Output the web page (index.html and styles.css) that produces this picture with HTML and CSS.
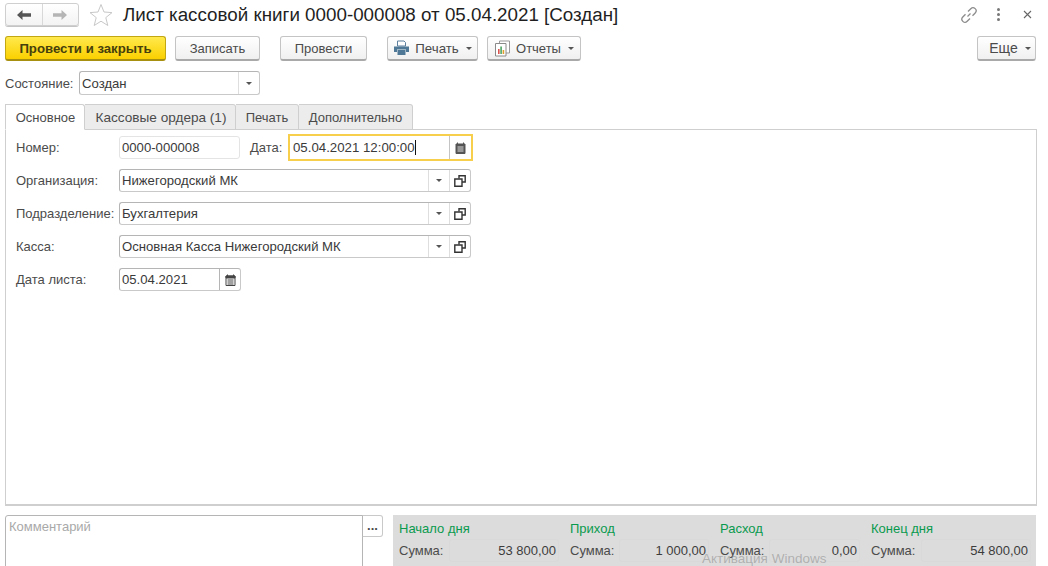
FILE: index.html

```html
<!DOCTYPE html>
<html lang="ru">
<head>
  <meta charset="UTF-8">
  <title>Лист кассовой книги</title>
  <link rel="stylesheet" href="styles.css">
</head>
<body>

  <div class="head">
    <div class="nav">
      <div class="nav-btn">
        <svg width="16" height="12" viewBox="0 0 16 12"><path d="M1 6 L6.5 1 V4.2 H15 V7.8 H6.5 V11 Z" fill="#555"/></svg>
      </div>
      <div class="nav-btn">
        <svg width="16" height="12" viewBox="0 0 16 12"><path d="M15 6 L9.5 1 V4.2 H1 V7.8 H9.5 V11 Z" fill="#b5b5b5"/></svg>
      </div>
    </div>
    <svg class="star" width="24" height="24" viewBox="0 0 24 24"><path d="M12 1.5 L15 9 L23 9.6 L16.8 14.6 L18.8 22.5 L12 18.2 L5.2 22.5 L7.2 14.6 L1 9.6 L9 9 Z" fill="#fff" stroke="#c8c8c8"/></svg>
    <h1 class="title">Лист кассовой книги 0000-000008 от 05.04.2021 [Создан]</h1>
    <div class="win-icons">
      <svg class="ico-link" width="18" height="18" viewBox="0 0 18 18" fill="none" stroke="#8c8c8c" stroke-width="1.3"><path d="M7.5 10.5 L10.5 7.5"/><path d="M8 5.5 L10.8 2.7 a3 3 0 0 1 4.4 4.3 L12.5 9.8"/><path d="M10 12.5 L7.2 15.3 a3 3 0 0 1 -4.4 -4.3 L5.5 8.2"/></svg>
      <div class="ico-dots"><i></i><i></i><i></i></div>
      <svg class="ico-close" width="9" height="9" viewBox="0 0 9 9" stroke="#666" stroke-width="1.1"><path d="M1 1 L8 8 M8 1 L1 8"/></svg>
    </div>
  </div>

  <div class="toolbar">
    <button class="btn btn-main">Провести и закрыть</button>
    <button class="btn btn-write">Записать</button>
    <button class="btn btn-post">Провести</button>
    <button class="btn btn-print">
      <svg width="17" height="16" viewBox="0 0 17 16"><path d="M4.5 1 H11 L12.5 2.5 V6 H4.5 Z" fill="#fff" stroke="#5b7f9c"/><path d="M1 6.5 H16 V12 H13 V9.5 H4 V12 H1 Z" fill="#4f7896"/><path d="M4.5 10 H12.5 V15 H4.5 Z" fill="#4f7896"/></svg>
      Печать <span class="caret"></span>
    </button>
    <button class="btn btn-rep">
      <svg width="17" height="17" viewBox="0 0 17 17"><path d="M5.5 1 H15.5 V13 H5.5 Z" fill="#fff" stroke="#9a9a9a"/><path d="M1.5 3.5 H12 V16 H1.5 Z" fill="#fff" stroke="#8a8a8a"/><path d="M4 9 H5.6 V14 H4 Z" fill="#d9534f"/><path d="M6.3 6.5 H7.9 V14 H6.3 Z" fill="#4aa564"/><path d="M8.6 10 H10.2 V14 H8.6 Z" fill="#e0a030"/></svg>
      Отчеты <span class="caret"></span>
    </button>
    <button class="btn btn-more">Еще <span class="caret"></span></button>
  </div>

  <div class="state-row">
    <span class="state-label">Состояние:</span>
    <div class="field state-field">
      <span class="val">Создан</span>
      <span class="fbtn"><span class="caret"></span></span>
    </div>
  </div>

  <div class="tabs">
    <div class="tab tab-on">Основное</div>
    <div class="tab t2">Кассовые ордера (1)</div>
    <div class="tab t3">Печать</div>
    <div class="tab t4">Дополнительно</div>
  </div>

  <div class="panel">
    <div class="row row-num">
      <span class="lbl">Номер:</span>
      <div class="field f-num"><span class="val">0000-000008</span></div>
      <span class="lbl-date">Дата:</span>
      <div class="field f-date">
        <span class="val">05.04.2021 12:00:00<span class="cursor"></span></span>
        <span class="fbtn fbtn-cal">
          <svg width="11" height="12" viewBox="0 0 11 12"><path d="M1 2 H10 V11.5 H1 Z M2.5 0.5 V2 M8.5 0.5 V2" fill="#555" stroke="#555"/><path d="M2.5 5 H8.5 M2.5 7 H8.5 M2.5 9 H8.5" stroke="#ddd"/></svg>
        </span>
      </div>
    </div>

    <div class="row row-org">
      <span class="lbl">Организация:</span>
      <div class="field f-ref">
        <span class="val">Нижегородский МК</span>
        <span class="fbtn"><span class="caret"></span></span>
        <span class="fbtn">
          <svg width="12" height="12" viewBox="0 0 12 12" fill="none" stroke="#333" stroke-width="1.4"><path d="M5 3.5 V0.8 H11.2 V7 H8"/><path d="M0.8 4 H8 V11.2 H0.8 Z"/></svg>
        </span>
      </div>
    </div>

    <div class="row">
      <span class="lbl">Подразделение:</span>
      <div class="field f-ref">
        <span class="val">Бухгалтерия</span>
        <span class="fbtn"><span class="caret"></span></span>
        <span class="fbtn">
          <svg width="12" height="12" viewBox="0 0 12 12" fill="none" stroke="#333" stroke-width="1.4"><path d="M5 3.5 V0.8 H11.2 V7 H8"/><path d="M0.8 4 H8 V11.2 H0.8 Z"/></svg>
        </span>
      </div>
    </div>

    <div class="row">
      <span class="lbl">Касса:</span>
      <div class="field f-ref">
        <span class="val">Основная Касса Нижегородский МК</span>
        <span class="fbtn"><span class="caret"></span></span>
        <span class="fbtn">
          <svg width="12" height="12" viewBox="0 0 12 12" fill="none" stroke="#333" stroke-width="1.4"><path d="M5 3.5 V0.8 H11.2 V7 H8"/><path d="M0.8 4 H8 V11.2 H0.8 Z"/></svg>
        </span>
      </div>
    </div>

    <div class="row">
      <span class="lbl">Дата листа:</span>
      <div class="field f-list">
        <span class="val">05.04.2021</span>
        <span class="fbtn fbtn-cal">
          <svg width="11" height="12" viewBox="0 0 11 12"><path d="M1 2 H10 V11.5 H1 Z" fill="#fff" stroke="#444"/><path d="M1 2 H10 V4 H1 Z M2.5 0.5 V2 M8.5 0.5 V2" fill="#444" stroke="#444"/><path d="M2.5 6 H8.5 M2.5 8 H8.5 M2.5 10 H8.5" stroke="#444"/></svg>
        </span>
      </div>
    </div>
  </div>

  <div class="bottom">
    <div class="comment">
      <div class="comment-text">Комментарий</div>
      <div class="comment-btn">...</div>
    </div>
    <div class="totals">
      <div class="col c1">
        <div class="col-head">Начало дня</div>
        <div class="col-row"><span>Сумма:</span><span class="sum s1">53 800,00</span></div>
      </div>
      <div class="col c2">
        <div class="col-head">Приход</div>
        <div class="col-row"><span>Сумма:</span><span class="sum s2">1 000,00</span></div>
      </div>
      <div class="col c3">
        <div class="col-head">Расход</div>
        <div class="col-row"><span>Сумма:</span><span class="sum s3">0,00</span></div>
      </div>
      <div class="col c4">
        <div class="col-head">Конец дня</div>
        <div class="col-row"><span>Сумма:</span><span class="sum s4">54 800,00</span></div>
      </div>
    </div>
  </div>

  <div class="watermark">Активация Windows</div>

</body>
</html>
```

FILE: styles.css

```css
html, body {
  margin: 0;
  height: 566px;
  overflow: hidden;
}
body {
  background: #fff;
  color: #4b4b4b;
  font-family: "Liberation Sans", Arial, sans-serif;
  font-size: 13px;
  position: relative;
}

/* шапка */
.head {
  display: flex;
  align-items: center;
  height: 23px;
  padding: 3px 0 0 5px;
}
.nav {
  display: flex;
  width: 74px;
  height: 23px;
  box-sizing: border-box;
  border: 1px solid #cfcfcf;
  border-radius: 3px;
  background: linear-gradient(#fff, #f3f3f3);
  box-shadow: 0 1px 0 #c4c4c4;
}
.nav-btn {
  flex: 1;
  display: flex;
  align-items: center;
  justify-content: center;
}
.nav-btn + .nav-btn {
  border-left: 1px solid #d8d8d8;
}
.star {
  margin-left: 10px;
}
.title {
  margin: 1px 0 0 10px;
  font-size: 18.8px;
  font-weight: normal;
  color: #1f1f1f;
  white-space: nowrap;
}
.win-icons {
  margin-left: auto;
  display: flex;
  align-items: center;
  padding-right: 16px;
}
.ico-link {
  margin-right: 19px;
}
.ico-dots {
  display: flex;
  flex-direction: column;
  gap: 2px;
  margin-right: 23px;
}
.ico-dots i {
  width: 3px;
  height: 3px;
  background: #777;
  border-radius: 50%;
}

/* кнопки */
.toolbar {
  display: flex;
  padding: 10px 12px 0 5px;
  height: 25px;
}
.btn {
  display: flex;
  align-items: center;
  justify-content: center;
  gap: 5px;
  height: 25px;
  box-sizing: border-box;
  padding: 0;
  border: 1px solid #c4c4c4;
  border-bottom: 2px solid #a9a9a9;
  border-radius: 3px;
  background: linear-gradient(#fff, #f0f0f0);
  color: #4b4b4b;
  font: 13px "Liberation Sans", Arial, sans-serif;
}
.btn-main {
  width: 161px;
  font-size: 13.2px;
  font-weight: bold;
  color: #45400c;
  background: linear-gradient(#ffe94d, #fbd000);
  border-color: #c2a712;
  border-bottom-color: #a78f10;
}
.btn-write { width: 85px; margin-left: 9px; }
.btn-post { width: 87px; margin-left: 20px; }
.btn-print { width: 91px; margin-left: 20px; font-size: 13.3px; }
.btn-rep { width: 94px; margin-left: 9px; }
.btn-more { width: 59px; margin-left: auto; padding-left: 7px; font-size: 14px; }
.caret {
  display: inline-block;
  width: 0;
  height: 0;
  margin-left: 2px;
  border-left: 3px solid transparent;
  border-right: 3px solid transparent;
  border-top: 3px solid #555;
}

/* поля */
.field {
  display: flex;
  align-items: center;
  box-sizing: border-box;
  height: 23px;
  background: #fff;
  border: 1px solid #c9c9c9;
  border-top-color: #b5b5b5;
  border-left-color: #b5b5b5;
  border-radius: 3px;
  color: #3a3a3a;
}
.val {
  flex: 1;
  padding-left: 2px;
  font-size: 13.15px;
  white-space: nowrap;
}
.fbtn {
  display: flex;
  align-items: center;
  justify-content: center;
  width: 20px;
  height: 100%;
  border-left: 1px solid #dedede;
}
.fbtn .caret {
  margin: 0;
}

.state-row {
  display: flex;
  align-items: center;
  height: 24px;
  padding: 10px 0 0 5px;
}
.state-label {
  width: 74px;
}
.state-field {
  width: 181px;
  height: 24px;
}

.tabs {
  display: flex;
  height: 26px;
  margin: 9px 0 0 5px;
}
.tab {
  box-sizing: border-box;
  height: 26px;
  padding-top: 5px;
  text-align: center;
  background: #ececec;
  border: 1px solid #cfcfcf;
  border-left: 0;
  border-radius: 0 3px 0 0;
}
.tab-on {
  width: 80px;
  padding-left: 1px;
  background: #fff;
  border-left: 1px solid #cfcfcf;
  border-bottom-color: #fff;
  position: relative;
  z-index: 1;
}
.t2 { width: 151px; padding-left: 2px; font-size: 13.6px; }
.t3 { width: 63px; }
.t4 { width: 114px; }

.panel {
  box-sizing: border-box;
  width: 1032px;
  height: 377px;
  margin: -1px 0 0 5px;
  padding: 4px 0 0 10px;
  border: 1px solid #cfcfcf;
  border-bottom: 2px solid #cfcfcf;
}
.row {
  display: flex;
  align-items: center;
  height: 23px;
  margin-top: 10px;
}
.row-num {
  height: 27px;
  margin-top: 0;
}
.row-org {
  margin-top: 8px;
}
.lbl {
  width: 103px;
}
.lbl-date {
  margin-left: 10px;
  width: 38px;
}
.f-num {
  width: 121px;
  border-color: #e4e4e4;
}
.f-date {
  width: 185px;
  height: 27px;
  border: 2px solid #f7cf4d;
  border-radius: 0;
}
.f-date .val {
  padding-left: 3px;
  font-size: 13.25px;
}
.f-date .fbtn {
  height: 23px;
  width: 21px;
  border-left-color: #c4c4c4;
}
.cursor {
  display: inline-block;
  width: 1px;
  height: 15px;
  background: #111;
  vertical-align: -3px;
}
.f-ref {
  width: 352px;
}
.f-list {
  width: 122px;
}
.fbtn-cal {
  border-left-color: #b5b5b5;
}

/* низ */
.bottom {
  display: flex;
  margin: 9px 0 0 5px;
}
.comment {
  display: flex;
  width: 378px;
  height: 60px;
}
.comment-text {
  box-sizing: border-box;
  width: 358px;
  padding: 3px 0 0 3px;
  color: #a9a9a9;
  border: 1px solid #b5b5b5;
  border-radius: 3px 0 0 0;
}
.comment-btn {
  box-sizing: border-box;
  width: 21px;
  height: 22px;
  margin-left: -1px;
  text-align: center;
  font-weight: bold;
  line-height: 20px;
  border: 1px solid #c9c9c9;
  border-left-color: #b5b5b5;
  border-radius: 0 3px 3px 0;
}
.totals {
  display: flex;
  width: 643px;
  height: 60px;
  margin-left: 10px;
  background: #dcdcdc;
}
.col {
  box-sizing: border-box;
  padding: 6px 0 0 6px;
}
.c1 { width: 171px; }
.c2 { width: 150px; }
.c3 { width: 151px; }
.c4 { width: 171px; }
.col-head {
  color: #0a9a4e;
  height: 18px;
}
.col-row {
  display: flex;
  justify-content: space-between;
  align-items: center;
  height: 23px;
}
.sum {
  box-sizing: border-box;
  height: 23px;
  line-height: 21px;
  margin-right: 5px;
  padding-right: 2px;
  text-align: right;
  color: #3c3c3c;
  border: 1px solid #d9d9d9;
  border-radius: 3px;
}
.s1 { width: 110px; }
.s2 { width: 90px; }
.s3 { width: 91px; }
.s4 { width: 110px; }

.watermark {
  position: absolute;
  left: 702px;
  top: 551px;
  font-size: 13.5px;
  color: rgba(120, 120, 120, 0.45);
}
```
